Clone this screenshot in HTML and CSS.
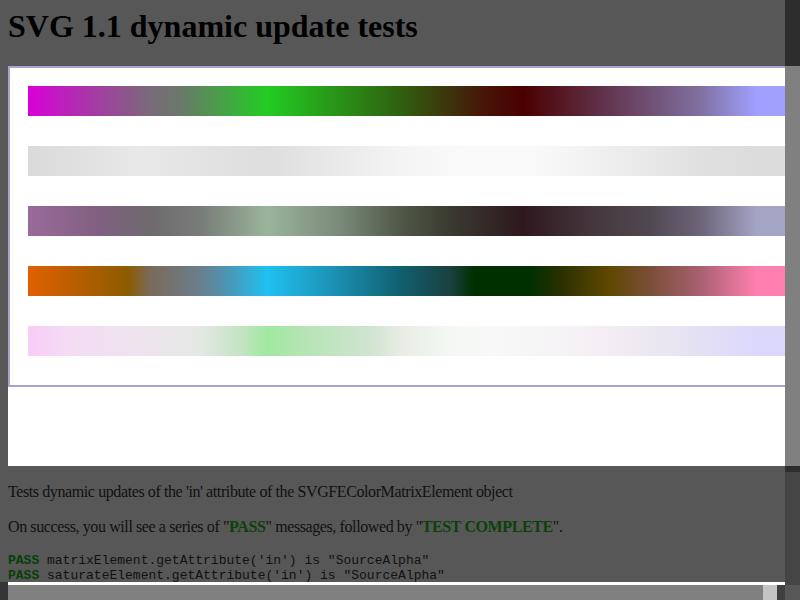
FILE: index.html
```html
<!DOCTYPE html>
<html>
<head>
<meta charset="utf-8">
<link rel="stylesheet" href="styles.css">
</head>
<body>
<h1 class="title">SVG 1.1 dynamic update tests</h1>
<div class="svgbox">
  <div class="frame">
    <div class="bars">
      <div class="bar bar1"></div>
      <div class="bar bar2"></div>
      <div class="bar bar3"></div>
      <div class="bar bar4"></div>
      <div class="bar bar5"></div>
    </div>
  </div>
</div>
<p class="desc">Tests dynamic updates of the 'in' attribute of the SVGFEColorMatrixElement object</p>
<p class="desc">On success, you will see a series of "<span class="ok">PASS</span>" messages, followed by "<span class="ok">TEST COMPLETE</span>".</p>
<div class="console">
  <div class="line"><span class="pass">PASS</span> matrixElement.getAttribute('in') is "SourceAlpha"</div>
  <div class="line"><span class="pass">PASS</span> saturateElement.getAttribute('in') is "SourceAlpha"</div>
  <div class="line"><span class="pass">PASS</span> hueRotateElement.getAttribute('in') is "SourceAlpha"</div>
</div>
<div class="vscroll">
  <div class="vs-top"></div>
  <div class="vs-thumb"></div>
  <div class="vs-gap"></div>
  <div class="vs-track"></div>
  <div class="vs-end"></div>
</div>
<div class="hscroll">
  <div class="hs-left"></div>
  <div class="hs-main">
    <div class="hs-bar"></div>
    <div class="hs-btn"></div>
    <div class="hs-dark"></div>
  </div>
</div>
</body>
</html>
```
FILE: styles.css
```css
html {
  overflow: hidden;
  background: #575757;
}
body {
  margin: 8px;
  background: #575757;
  color: #000;
  font-family: "Liberation Serif", serif;
  font-size: 16px;
}
.title {
  margin: 0 0 21px 0;
  font-size: 32px;
  font-weight: bold;
  color: #000;
}
.svgbox {
  width: 777px;
  height: 400px;
  background: #fff;
  overflow: hidden;
}
.frame {
  width: 800px;
  height: 317px;
  border: 2px solid #a4a4cc;
}
.bars {
  display: flex;
  flex-direction: column;
  gap: 30px;
  padding: 18px 0 0 18px;
}
.bar {
  width: 760px;
  height: 30px;
  flex: none;
}
.bar1 {
  background: linear-gradient(to right, #d800d8 0px, #a040a0 72px, #7a6a7a 122px, #6a786a 152px, #22cc22 239px, #306010 372px, #461808 452px, #4a0000 495px, #603048 572px, #8070a0 672px, #a0a0ff 729px, #a0a0ff 760px);
}
.bar2 {
  background: linear-gradient(to right, #dadada 0px, #e8e8e8 112px, #dedede 239px, #f4f4f4 372px, #fafafa 440px, #fafafa 500px, #f0f0f0 572px, #e0e0e0 672px, #dcdcdc 729px, #dcdcdc 760px);
}
.bar3 {
  background: linear-gradient(to right, #9a6a9a 0px, #806080 72px, #6e6a6e 122px, #787c78 172px, #9ab49a 239px, #7a8a7a 312px, #505848 372px, #3a3a30 422px, #2e181e 495px, #463a40 572px, #504850 622px, #6c6478 672px, #a4a4c4 729px, #a4a4c4 760px);
}
.bar4 {
  background: linear-gradient(to right, #e06000 0px, #8c5c00 100px, #7a6a5a 122px, #6a7e8c 172px, #4898b8 202px, #20c0f0 239px, #1c94b8 302px, #106070 372px, #1a4040 422px, #003000 446px, #003000 503px, #2a3000 532px, #604800 582px, #7a4e38 622px, #a86070 672px, #ff80b0 729px, #ff80b0 760px);
}
.bar5 {
  background: linear-gradient(to right, #f8ccf8 0px, #f4dcf4 42px, #ece4ec 122px, #e4e8e4 172px, #c4e4c4 212px, #a0e8a0 239px, #b4e4b4 272px, #d0e4d0 342px, #e8ece4 372px, #f4f8f4 422px, #f8f8f8 472px, #f6f4f6 532px, #f4eef4 572px, #ece8f0 622px, #e4e0f4 672px, #dcd8fc 729px, #dcd8fc 760px);
}
.desc {
  margin: 17px 0;
  color: #111;
  letter-spacing: -0.4px;
}
.ok {
  color: #0a420a;
  font-weight: bold;
}
.pass {
  color: #064006;
  font-weight: bold;
}
.console {
  font-family: "Liberation Mono", monospace;
  font-size: 13px;
  color: #111;
}
.vscroll {
  position: fixed;
  top: 0;
  right: 0;
  width: 15px;
  height: 600px;
  display: flex;
  flex-direction: column;
}
.vs-top { height: 66px; background: #2d2d2d; }
.vs-thumb { height: 400px; background: #808080; }
.vs-gap { height: 6px; background: #2d2d2d; }
.vs-track { flex: 1; background: #454545; }
.vs-end { height: 15px; background: #575757; }
.hscroll {
  position: fixed;
  left: 0;
  bottom: 0;
  width: 785px;
  height: 18px;
  display: flex;
}
.hs-left {
  width: 8px;
  background: #353535;
}
.hs-main {
  flex: 1;
  display: flex;
  border-top: 3px solid #fff;
}
.hs-bar { flex: 1; background: #808080; }
.hs-btn { width: 14px; background: #c4c4c4; }
.hs-dark { width: 8px; background: #404040; }
```
